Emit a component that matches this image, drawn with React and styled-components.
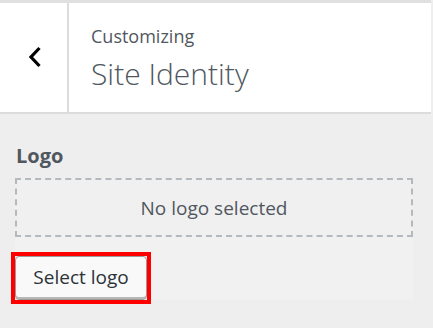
import React from "react";
import styled, { createGlobalStyle } from "styled-components";

const Global = createGlobalStyle`
  html, body { margin: 0; padding: 0; }
  body {
    background: #eeeeee;
    font-family: "Open Sans", "Noto Sans", sans-serif;
    width: 433px;
    height: 328px;
    overflow: hidden;
  }
`;

const Page = styled.div`
  width: 431px;
  display: flex;
  flex-direction: column;
`;

const Header = styled.header`
  display: flex;
  height: 109px;
  background: #ffffff;
  border-top: 3px solid #e0e0e0;
  border-bottom: 2px solid #dcdcde;
`;

const BackButton = styled.button`
  width: 69px;
  flex: none;
  display: flex;
  align-items: center;
  justify-content: center;
  padding: 0 0 2px 2px;
  margin: 0;
  background: transparent;
  border: none;
  border-right: 2px solid #dcdcde;
  color: #000;
  cursor: pointer;
`;

const TitleBlock = styled.div`
  display: flex;
  flex-direction: column;
  padding: 21px 0 0 22px;
`;

const Eyebrow = styled.span`
  font-size: 18px;
  line-height: 24px;
  color: #50575e;
`;

const Title = styled.h1`
  margin: 8px 0 0;
  font-size: 30px;
  font-weight: 300;
  line-height: 36px;
  color: #50575e;
`;

const Section = styled.section`
  display: flex;
  flex-direction: column;
  padding: 29px 18px 0 15px;
`;

const Label = styled.span`
  font-size: 20px;
  font-weight: 700;
  line-height: 26px;
  color: #50575e;
  padding-left: 1px;
`;

const Placeholder = styled.div`
  margin-top: 9px;
  height: 55px;
  display: flex;
  align-items: center;
  justify-content: center;
  background: #f0f0f1;
  border: 2px dashed #b4b9be;
  font-size: 19px;
  color: #50575e;
`;

const Actions = styled.div`
  display: flex;
  background: #f1f1f1;
  padding: 15px 0 0 0;
  height: 48px;
`;

const Highlight = styled.span`
  display: inline-flex;
  align-self: flex-start;
  margin-left: -4px;
  border: 4px solid #ff0000;
`;

const Button = styled.button`
  width: 132px;
  height: 44px;
  padding: 0 0 2px;
  box-sizing: border-box;
  background: #f9f9f9;
  border: 1px solid #9a9a9a;
  border-radius: 4px;
  box-shadow: inset 0 -2px 0 #b8b8b8;
  font-family: "Open Sans", "Noto Sans", sans-serif;
  font-size: 19px;
  color: #2c3338;
  cursor: pointer;
`;

export default function App() {
  return (
    <>
      <Global />
      <Page>
        <Header>
          <BackButton aria-label="Back">
            <svg width="14" height="22" viewBox="0 0 14 22">
              <path d="M11.5 2 L3 11 L11.5 20" fill="none" stroke="#000" strokeWidth="3.2" />
            </svg>
          </BackButton>
          <TitleBlock>
            <Eyebrow>Customizing</Eyebrow>
            <Title>Site Identity</Title>
          </TitleBlock>
        </Header>
        <Section>
          <Label>Logo</Label>
          <Placeholder>No logo selected</Placeholder>
          <Actions>
            <Highlight>
              <Button>Select logo</Button>
            </Highlight>
          </Actions>
        </Section>
      </Page>
    </>
  );
}
